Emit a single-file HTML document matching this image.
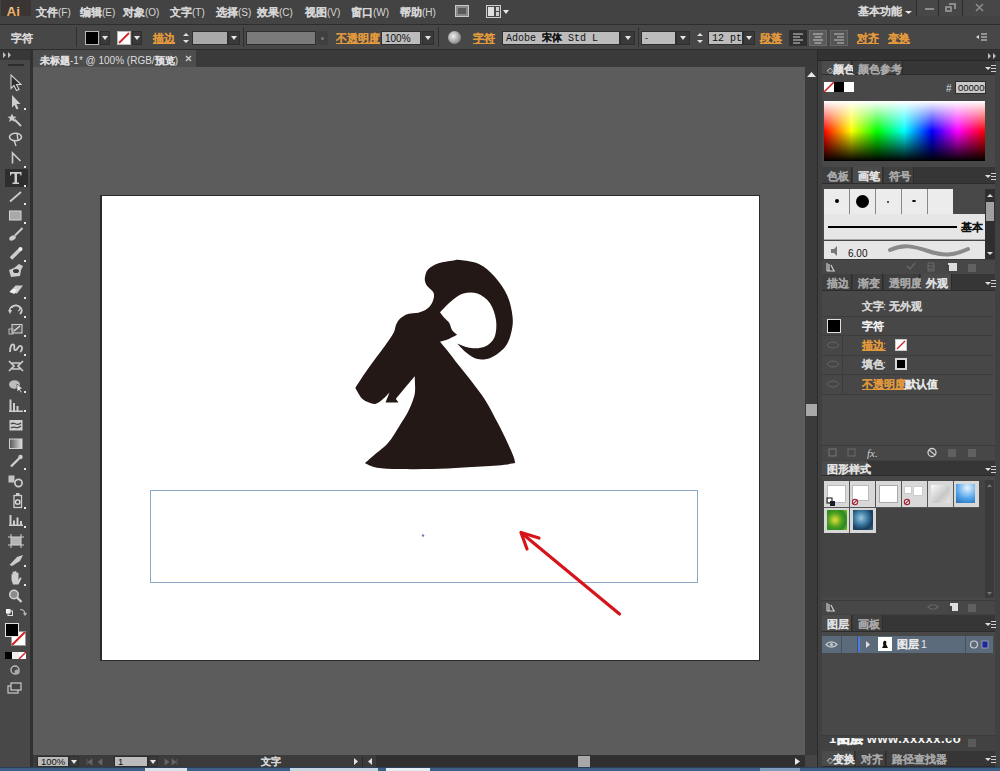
<!DOCTYPE html>
<html><head><meta charset="utf-8">
<style>
*{margin:0;padding:0;box-sizing:border-box}
html,body{width:1000px;height:771px;overflow:hidden;background:#535353;font-family:"Liberation Sans",sans-serif;font-size:11px;color:#d6d6d6}
.a{position:absolute}
.t{position:absolute;white-space:nowrap;line-height:11px;font-size:11px}
.c{display:inline-block;text-align:justify;text-align-last:justify;-webkit-text-stroke:0.7px currentColor;white-space:nowrap}
.or{color:#e39a3c}
.ul,.ul .c{text-decoration:underline}
.inp{position:absolute;background:#bcbcbc;border:1px solid #2e2e2e;color:#111;font-size:10px;line-height:11px;padding-left:3px;white-space:nowrap}
.dd{position:absolute;background:#3a3a3a;border:1px solid #2e2e2e}
.dd:after{content:"";position:absolute;left:50%;top:50%;margin-left:-3px;margin-top:-2px;border-left:3px solid transparent;border-right:3px solid transparent;border-top:4px solid #e6e6e6}
.sep{position:absolute;width:1px;background:#2f2f2f}
svg{position:absolute;overflow:visible}
</style></head><body>
<!-- ============ MENU BAR ============ -->
<div class="a" style="left:0;top:0;width:1000px;height:24px;background:#434343"></div>
<div class="a" style="left:1px;top:0;width:30px;height:16px;background:#3a3532"></div>
<svg style="left:0;top:0" width="40" height="24"><defs><linearGradient id="aig" x1="0" y1="0" x2="0" y2="1"><stop offset="0" stop-color="#f2dca8"/><stop offset="1" stop-color="#e0923c"/></linearGradient></defs><text x="6.5" y="16" font-family="Liberation Sans" font-weight="bold" font-size="13.5" fill="url(#aig)">Ai</text></svg>
<div class="t" style="left:36px;top:7px"><span class="c" style="width:2em;">文件</span><span style="font-size:10px">(F)</span></div>
<div class="t" style="left:80px;top:7px"><span class="c" style="width:2em;">编辑</span><span style="font-size:10px">(E)</span></div>
<div class="t" style="left:123px;top:7px"><span class="c" style="width:2em;">对象</span><span style="font-size:10px">(O)</span></div>
<div class="t" style="left:170px;top:7px"><span class="c" style="width:2em;">文字</span><span style="font-size:10px">(T)</span></div>
<div class="t" style="left:216px;top:7px"><span class="c" style="width:2em;">选择</span><span style="font-size:10px">(S)</span></div>
<div class="t" style="left:257px;top:7px"><span class="c" style="width:2em;">效果</span><span style="font-size:10px">(C)</span></div>
<div class="t" style="left:305px;top:7px"><span class="c" style="width:2em;">视图</span><span style="font-size:10px">(V)</span></div>
<div class="t" style="left:351px;top:7px"><span class="c" style="width:2em;">窗口</span><span style="font-size:10px">(W)</span></div>
<div class="t" style="left:400px;top:7px"><span class="c" style="width:2em;">帮助</span><span style="font-size:10px">(H)</span></div>
<!-- Br icon -->
<div class="a" style="left:455px;top:5px;width:14px;height:12px;background:#8a8a8a;border:1px solid #c8c8c8"></div>
<div class="a" style="left:458px;top:8px;width:8px;height:6px;background:#5a5a5a"></div>
<!-- arrange icon -->
<div class="a" style="left:486px;top:5px;width:15px;height:13px;border:1px solid #cfcfcf;background:#4a4a4a"></div>
<div class="a" style="left:488px;top:7px;width:6px;height:9px;background:#e0e0e0"></div>
<div class="a" style="left:496px;top:7px;width:3px;height:4px;background:#d0d0d0"></div>
<div class="a" style="left:496px;top:12px;width:3px;height:4px;background:#d0d0d0"></div>
<div class="a" style="left:503px;top:10px;border-left:3px solid transparent;border-right:3px solid transparent;border-top:4px solid #e8e8e8"></div>
<div class="t" style="left:858px;top:6px"><span class="c" style="width:4em;">基本功能</span></div>
<svg style="left:904px;top:10px" width="9" height="5"><path d="M1 1H8L4.5 4Z" fill="#e8e8e8"/></svg>
<div class="a" style="left:917px;top:0;width:83px;height:16px;background:#474747"></div>
<div class="sep" style="left:916px;top:0;height:16px;background:#2c2c2c"></div>
<div class="sep" style="left:938px;top:0;height:16px;background:#2c2c2c"></div>
<div class="sep" style="left:962px;top:0;height:16px;background:#2c2c2c"></div>
<div class="a" style="left:925px;top:8px;width:9px;height:2px;background:#8c8c8c"></div>
<div class="a" style="left:945px;top:6px;width:7px;height:6px;border:2px solid #8c8c8c;border-radius:1px"></div>
<div class="a" style="left:949px;top:3px;width:7px;height:6px;border:2px solid #8c8c8c;border-left:none;border-bottom:none"></div>
<svg style="left:975px;top:3px" width="10" height="10"><path d="M1 1L8 8M8 1L1 8" stroke="#8c8c8c" stroke-width="1.6"/></svg>

<!-- ============ CONTROL BAR ============ -->
<div class="a" style="left:0;top:24px;width:1000px;height:26px;background:#474747;border-top:1px solid #2d2d2d;border-bottom:1px solid #2d2d2d"></div>
<div class="t" style="left:11px;top:33px"><span class="c" style="width:2em;">字符</span></div>
<div class="sep" style="left:76px;top:27px;height:20px"></div>
<div class="a" style="left:85px;top:31px;width:14px;height:14px;background:#000;border:1px solid #b8b8b8"></div>
<div class="dd" style="left:100px;top:31px;width:10px;height:14px"></div>
<div class="a" style="left:117px;top:31px;width:14px;height:14px;background:#fff;border:1px solid #b8b8b8"></div>
<svg style="left:117px;top:31px" width="14" height="14"><path d="M2 12L12 2" stroke="#d42828" stroke-width="1.8"/></svg>
<div class="dd" style="left:132px;top:31px;width:10px;height:14px"></div>
<div class="t or ul" style="left:153px;top:33px"><span class="c" style="width:2em;">描边</span></div>
<svg style="left:182px;top:31px" width="8" height="14"><path d="M1 5L4 2L7 5ZM1 9L4 12L7 9Z" fill="#e0e0e0"/></svg>
<div class="inp" style="left:192px;top:31px;width:36px;height:14px;background:#a9a9a9"></div>
<div class="dd" style="left:228px;top:31px;width:12px;height:14px"></div>
<div class="sep" style="left:243px;top:27px;height:20px"></div>
<div class="a" style="left:246px;top:31px;width:70px;height:14px;background:#7a7a7a;border:1px solid #2e2e2e"></div>
<div class="a" style="left:317px;top:31px;width:11px;height:14px;background:#404040"></div>
<div class="a" style="left:321px;top:37px;width:3px;height:3px;background:#777;border-radius:2px"></div>
<div class="t or ul" style="left:336px;top:33px"><span class="c" style="width:4em;">不透明度</span></div>
<div class="inp" style="left:381px;top:31px;width:40px;height:14px;padding-top:1px">100%</div>
<div class="dd" style="left:422px;top:31px;width:12px;height:14px"></div>
<div class="sep" style="left:438px;top:27px;height:20px"></div>
<div class="a" style="left:448px;top:31px;width:13px;height:13px;border-radius:50%;background:radial-gradient(circle at 40% 40%,#f0f0f0,#8a8a8a 70%,#555)"></div>
<div class="t or ul" style="left:473px;top:33px"><span class="c" style="width:2em;">字符</span></div>
<div class="inp" style="left:502px;top:31px;width:118px;height:14px;padding-top:1px;font-family:'Liberation Mono',monospace;font-size:10px">Adobe <span class="c" style="width:2em;">宋体</span> Std L</div>
<div class="dd" style="left:620px;top:31px;width:15px;height:14px"></div>
<div class="sep" style="left:638px;top:27px;height:20px"></div>
<div class="inp" style="left:641px;top:31px;width:35px;height:14px;padding-top:1px;font-size:9px">-</div>
<div class="dd" style="left:676px;top:31px;width:14px;height:14px"></div>
<svg style="left:696px;top:31px" width="8" height="14"><path d="M1 5L4 2L7 5ZM1 9L4 12L7 9Z" fill="#e0e0e0"/></svg>
<div class="inp" style="left:708px;top:31px;width:35px;height:14px;padding-top:1px;font-family:'Liberation Mono',monospace">12 pt</div>
<div class="dd" style="left:743px;top:31px;width:12px;height:14px"></div>
<div class="t or ul" style="left:760px;top:33px"><span class="c" style="width:2em;">段落</span></div>
<div class="a" style="left:789px;top:30px;width:18px;height:16px;background:#2f2f2f"></div>
<div class="a" style="left:809px;top:30px;width:18px;height:16px;background:#5a5a5a;border:1px solid #6a6a6a"></div>
<div class="a" style="left:830px;top:30px;width:18px;height:16px;background:#545454;border:1px solid #666"></div>
<svg style="left:789px;top:30px" width="60" height="16">
<path d="M4 4h10M4 7h7M4 10h10M4 13h7" stroke="#d0d0d0" stroke-width="1"/>
<path d="M24 4h10M25.5 7h7M24 10h10M25.5 13h7" stroke="#c8c8c8" stroke-width="1"/>
<path d="M45 4h10M48 7h7M45 10h10M48 13h7" stroke="#c0c0c0" stroke-width="1"/>
</svg>
<div class="t or ul" style="left:857px;top:33px"><span class="c" style="width:2em;">对齐</span></div>
<div class="t or ul" style="left:888px;top:33px"><span class="c" style="width:2em;">变换</span></div>
<svg style="left:975px;top:32px" width="14" height="12"><path d="M1 5L4 3L4 7Z" fill="#ddd"/><path d="M6 2h6M6 5h6M6 8h6" stroke="#ddd" stroke-width="1.2"/></svg>
<!-- ============ DOC TAB ROW ============ -->
<div class="a" style="left:32px;top:50px;width:786px;height:17px;background:#3a3a3a"></div>
<div class="a" style="left:32px;top:50px;width:164px;height:17px;background:#4d4d4d"></div>
<div class="t" style="left:40px;top:55px;font-size:10px;color:#dedede"><span class="c" style="width:3em;font-size:10px;">未标题</span>-1* @ 100% (RGB/<span class="c" style="width:2em;font-size:10px;">预览</span>)</div>
<svg style="left:185px;top:55px" width="8" height="8"><path d="M1 1L6 6M6 1L1 6" stroke="#cfcfcf" stroke-width="1.3"/></svg>

<!-- ============ TOOLBAR ============ -->
<div class="a" style="left:0;top:50px;width:33px;height:717px;background:#484848"></div>
<div class="a" style="left:0;top:50px;width:31px;height:10px;background:#373737"></div>
<svg style="left:3px;top:52px" width="10" height="6"><path d="M0 0L3 3L0 6ZM5 0L8 3L5 6Z" fill="#c0c0c0"/></svg>
<div class="a" style="left:8px;top:64px;width:16px;height:2px;background:#2c2c2c"></div>
<div class="a" style="left:30px;top:50px;width:3px;height:717px;background:#303030"></div>
<div class="a" style="left:5px;top:169px;width:23px;height:18px;background:#2e2e2e"></div>
<svg style="left:0;top:0" width="33" height="771">
<g fill="#cdcdcd" stroke="none">
<path d="M11 75L11 88.5L14 85.5L16.5 90.5L19 89.5L16.5 84.5L21 84.5Z" fill="#2c2c2c" stroke="#d2d2d2" stroke-width="1.1"/>
<path d="M12 95L12 107.5L14.5 105L16.5 109.5L18.5 108.5L16.5 104L20.5 104Z"/>
<path d="M12 113.5L13.3 116.6L16.5 116.8L14 118.8L15 122L12 120.2L9 122L10 118.8L7.5 116.8L10.7 116.6Z"/>
<path d="M14.5 119.5L21 126" stroke="#cdcdcd" stroke-width="1.8"/>
<ellipse cx="15.5" cy="137" rx="6" ry="3.8" fill="none" stroke="#cdcdcd" stroke-width="1.6"/>
<path d="M14 140L16 146M17 133L18 141" stroke="#cdcdcd" stroke-width="1.4"/>
<path d="M12.5 163.5L12.5 153L20.5 161" fill="none" stroke="#cdcdcd" stroke-width="1.6"/>
<path d="M10 172H21.5V175.5H20.5L20 173.8H17V182.6H19V184H12.5V182.6H14.5V173.8H11.5L11 175.5H10Z"/>
<path d="M10 201.5L21 192" stroke="#cdcdcd" stroke-width="1.7"/>
<rect x="9.5" y="211" width="11.5" height="9" fill="#a8a8a8" stroke="#d4d4d4" stroke-width="1"/>
<path d="M22.5 228L15 235.5" stroke="#cdcdcd" stroke-width="2"/><ellipse cx="12.5" cy="238" rx="3.5" ry="2.3" transform="rotate(-30 12.5 238)"/>
<path d="M20.5 249L11 258.5" stroke="#cdcdcd" stroke-width="3.6"/><circle cx="20.5" cy="249" r="2" fill="#eee"/>
<path d="M9 270L14 268L19 264L23 266L21 270L20 276L11 277Z"/><ellipse cx="16" cy="271" rx="3" ry="2" fill="#3a3a3a"/>
<path d="M9.5 292L15.5 285.5L23 285.5L17 293.5Z"/><path d="M9.5 292L12.5 289L17 289L14.5 294Z" fill="#eee"/>
<path d="M10 312A6 5 0 1 1 20 314" fill="none" stroke="#cdcdcd" stroke-width="1.8"/><path d="M12 308A4 3 0 1 1 18 311" fill="none" stroke="#cdcdcd" stroke-width="1.2"/><path d="M8 310L12 310L10 314Z"/>
<rect x="12" y="324.5" width="10" height="8.5" fill="#5a5a5a" stroke="#d0d0d0" stroke-width="1.1"/><path d="M14 331L20 326" stroke="#ddd" stroke-width="1.3"/><rect x="9" y="329" width="4" height="5" fill="none" stroke="#bbb" stroke-width="1"/>
<path d="M10 352C10 346 12 343 14 345C15 347 13 351 16 350C18 349 18 345 21 346C23 347 22 351 20 352" fill="none" stroke="#cdcdcd" stroke-width="1.8"/>
<path d="M9 361L14 366L9 371M23 361L18 366L23 371M12 363H20M12 369H20" fill="none" stroke="#cdcdcd" stroke-width="1.7"/>
<ellipse cx="14.5" cy="384.5" rx="5.5" ry="4.2" fill="#bdbdbd"/><path d="M17 384L17 392L19 390L21 393L22 392L20 389L23 389Z" fill="#e4e4e4" stroke="#3a3a3a" stroke-width="0.6"/>
<path d="M9.5 412V399.5H11.5V412ZM13 412V403H15V412ZM16.5 412V406H18.5V412ZM9 410.5H23V412H9Z"/>
<rect x="9.5" y="420" width="13" height="10.5" fill="#cfcfcf"/><path d="M11 424C14 421 17 427 21 423M11 428C14 425 17 430 21 426" stroke="#444" stroke-width="1.3" fill="none"/>
<rect x="9.5" y="439" width="12.5" height="9.5" fill="url(#tg)" stroke="#cfcfcf" stroke-width="1"/>
<path d="M21.5 456L11 466.5" stroke="#cdcdcd" stroke-width="2.4"/><circle cx="20.5" cy="457" r="2.2"/>
<rect x="8.5" y="475.5" width="6" height="7" fill="#c4c4c4"/><circle cx="18.5" cy="483" r="3.6" fill="none" stroke="#cdcdcd" stroke-width="1.7"/>
<rect x="14" y="495.5" width="7.5" height="12" fill="none" stroke="#cdcdcd" stroke-width="1.3"/><circle cx="17.7" cy="502" r="2.2" fill="none" stroke="#e0e0e0" stroke-width="1.3"/><rect x="16" y="493" width="3.5" height="2"/>
<path d="M9.5 526V515H11.5V526ZM13 526V520.5H15V526ZM16.5 526V517.5H18.5V526ZM20 526V521H22V526ZM9 524.5H23V526H9Z"/>
<rect x="11" y="537" width="10" height="8" fill="#b4b4b4"/><path d="M8 537H24M8 545H24M11 534V548M21 534V548" stroke="#d0d0d0" stroke-width="1"/>
<path d="M9.5 565L17 557L23 555L20 561L12 566Z"/>
<path d="M11.5 580V574.5Q11.5 573.5 12.5 574.5V579V572Q13.5 571 14.5 572V579V571.5Q15.5 570.5 16.5 571.5V579V573Q17.5 572 18.5 573V580L20 577.5Q21.5 577 21.5 578.5L18.5 584.5H13Z"/>
<circle cx="14" cy="594.5" r="4.2" fill="#8a8a8a" stroke="#d0d0d0" stroke-width="1.6"/><path d="M17 597.5L21.5 602" stroke="#d0d0d0" stroke-width="2.4"/>
<path d="M24 108h2v2h-2zM24 166h2v2h-2zM24 185h2v2h-2zM24 203h2v2h-2zM24 222h2v2h-2zM24 260h2v2h-2zM24 297h2v2h-2zM24 316h2v2h-2zM24 335h2v2h-2zM24 354h2v2h-2zM24 391h2v2h-2zM24 410h2v2h-2zM24 468h2v2h-2zM24 507h2v2h-2zM24 526h2v2h-2zM24 565h2v2h-2zM24 584h2v2h-2z" fill="#e6e6e6"/>
<rect x="6" y="609" width="4.5" height="4.5" fill="#fff"/><rect x="8" y="611" width="4.5" height="4.5" fill="none" stroke="#ddd" stroke-width="1"/>
<path d="M20 609.5C23 609.5 25 611.5 25 614.5M23.5 613L25 615L26.5 613" fill="none" stroke="#bbb" stroke-width="1.2"/>
</g>
<defs><linearGradient id="tg"><stop offset="0" stop-color="#555"/><stop offset="1" stop-color="#e0e0e0"/></linearGradient></defs>
</svg>
<!-- fill / stroke -->
<div class="a" style="left:11px;top:631px;width:15px;height:15px;background:#fff;border:1px solid #999"></div>
<svg style="left:11px;top:631px" width="15" height="15"><path d="M1 14L14 1" stroke="#d02020" stroke-width="2"/><rect x="3" y="3" width="9" height="9" fill="none" stroke="#d02020" stroke-width="0"/></svg>
<div class="a" style="left:5px;top:623px;width:14px;height:14px;background:#000;border:1px solid #e0e0e0"></div>
<div class="a" style="left:5px;top:652px;width:7px;height:7px;background:#000"></div>
<div class="a" style="left:12px;top:652px;width:7px;height:7px;background:#eee"></div>
<div class="a" style="left:19px;top:652px;width:7px;height:7px;background:#fff"></div>
<svg style="left:19px;top:652px" width="7" height="7"><path d="M0 7L7 0" stroke="#d02020" stroke-width="1.5"/></svg>
<svg style="left:0;top:0" width="33" height="771">
<circle cx="15" cy="670" r="4" fill="none" stroke="#bbb" stroke-width="1.4"/><circle cx="17" cy="672" r="2.5" fill="#aaa"/>
<rect x="8" y="686" width="10" height="7" fill="none" stroke="#ccc" stroke-width="1.2"/><rect x="11" y="683" width="10" height="7" fill="#444" stroke="#ccc" stroke-width="1.2"/>
</svg>
<!-- ============ CANVAS ============ -->
<div class="a" style="left:33px;top:67px;width:772px;height:688px;background:#5c5c5c"></div>
<div class="a" style="left:100px;top:195px;width:660px;height:466px;background:#2a2a2a"></div>
<div class="a" style="left:102px;top:196px;width:657px;height:464px;background:#fff"></div>
<svg style="left:0;top:0" width="1000" height="771">
<path fill="#231815" d="M355.3 388.0 C356.4 386.2 359.6 381.2 362.0 377.5 C364.4 373.8 367.0 370.2 370.0 366.0 C373.0 361.8 376.8 356.8 380.0 352.5 C383.2 348.2 386.7 343.4 389.0 340.0 C391.3 336.6 392.8 334.5 394.0 332.0 C395.2 329.5 395.0 327.2 396.0 325.0 C397.0 322.8 398.2 320.3 400.2 318.5 C402.2 316.7 405.0 315.0 408.0 314.0 C411.0 313.0 415.3 313.4 418.3 312.7 C421.3 311.9 423.9 310.9 426.1 309.5 C428.3 308.1 430.0 306.5 431.3 304.3 C432.6 302.1 433.8 298.7 434.0 296.5 C434.2 294.3 433.8 293.1 432.6 291.3 C431.4 289.5 428.1 287.6 426.8 285.5 C425.5 283.4 424.6 281.3 424.8 278.6 C425.0 275.9 425.8 272.0 428.0 269.5 C430.2 267.0 433.6 265.0 437.8 263.5 C442.0 262.0 449.7 261.1 453.4 260.5 C457.1 259.9 455.9 259.5 460.2 260.1 C464.4 260.7 473.2 261.3 478.9 264.0 C484.6 266.7 489.8 271.3 494.5 276.5 C499.2 281.7 504.0 288.5 507.0 295.0 C510.0 301.5 511.6 309.4 512.4 315.4 C513.2 321.4 512.8 325.8 511.6 331.0 C510.4 336.2 508.8 342.1 505.4 346.5 C502.0 350.9 496.1 355.3 491.4 357.4 C486.7 359.5 481.5 359.8 477.4 359.0 C473.2 358.2 469.9 355.3 466.5 352.7 C463.1 350.1 458.7 344.9 457.1 343.4 C459.4 344.2 466.4 347.5 471.1 348.0 C475.8 348.5 481.2 348.3 485.1 346.5 C489.0 344.7 492.7 341.6 494.5 337.2 C496.3 332.8 496.8 325.7 496.0 320.0 C495.2 314.3 492.9 307.4 489.8 303.0 C486.7 298.6 481.8 295.2 477.4 293.6 C473.0 292.0 467.7 292.3 463.3 293.6 C458.9 294.9 454.8 298.3 450.9 301.4 C447.0 304.5 441.8 310.5 440.0 312.3 C440.7 313.2 442.4 315.7 444.0 317.5 C445.6 319.3 448.0 320.9 449.3 323.0 C450.6 325.1 450.7 328.0 452.0 330.0 C453.3 332.0 456.2 334.0 457.1 334.8 C455.8 335.4 452.2 337.5 449.3 338.7 C446.4 339.9 441.6 341.3 440.0 341.8 C441.1 343.2 443.8 346.2 446.9 350.1 C450.0 354.0 454.5 360.0 458.7 365.3 C462.9 370.6 467.7 376.3 472.2 382.2 C476.7 388.1 481.4 394.0 485.6 400.7 C489.8 407.4 493.8 415.6 497.5 422.6 C501.2 429.6 505.0 437.3 507.6 442.9 C510.2 448.5 512.0 452.6 513.3 456.0 C514.6 459.4 514.9 461.9 515.2 463.1 C512.2 463.5 506.1 464.9 497.5 465.6 C488.9 466.3 474.6 466.9 463.7 467.5 C452.8 468.1 443.0 468.8 432.2 469.0 C421.4 469.2 408.3 469.2 399.1 469.0 C389.9 468.8 382.7 468.6 377.0 467.7 C371.3 466.8 366.9 464.0 364.9 463.3 C366.0 462.3 367.6 460.7 371.5 457.3 C375.4 453.9 383.4 448.1 388.0 443.0 C392.6 437.9 395.8 431.6 399.1 426.4 C402.4 421.2 405.5 416.6 407.9 412.0 C410.3 407.4 412.2 402.5 413.4 398.8 C414.6 395.1 414.9 393.8 415.1 390.0 C415.3 386.2 414.8 378.5 414.7 376.2 C411.6 380.0 399.0 395.1 395.9 398.9 C396.3 399.5 398.1 401.9 398.5 402.5 C396.4 402.5 387.8 402.5 385.6 402.5 C386.2 400.8 388.9 394.1 389.5 392.4 C388.4 393.5 385.3 397.1 383.0 399.0 C380.7 400.9 378.1 403.2 375.8 403.8 C373.5 404.4 371.4 403.4 369.0 402.5 C366.6 401.6 364.0 400.6 361.7 398.2 C359.4 395.8 356.4 389.7 355.3 388.0 Z"/>
<rect x="150.5" y="490.5" width="547" height="92" fill="none" stroke="#8ea7c7" stroke-width="1"/>
<circle cx="423" cy="535.5" r="1.2" fill="#7a7ab0"/>
<path d="M619.5 614L521.5 533" stroke="#d7141c" stroke-width="3.2" stroke-linecap="round"/>
<path d="M539 538L521 532.5L527 549" fill="none" stroke="#d7141c" stroke-width="3.2" stroke-linecap="round" stroke-linejoin="round"/>
</svg>
<!-- vertical scrollbar -->
<div class="a" style="left:805px;top:67px;width:13px;height:688px;background:#3b3b3b"></div>
<svg style="left:805px;top:70px" width="13" height="10"><path d="M2 7L6.5 2L11 7Z" fill="#e8e8e8"/></svg>
<div class="a" style="left:806px;top:404px;width:11px;height:12px;background:#a8a8a8"></div>
<!-- status bar -->
<div class="a" style="left:33px;top:755px;width:785px;height:12px;background:#3b3b3b"></div>
<div class="inp" style="left:37px;top:756px;width:32px;height:11px;font-size:9.5px;line-height:10px">100%</div>
<div class="dd" style="left:69px;top:756px;width:10px;height:11px"></div>
<svg style="left:85px;top:757px" width="80" height="10"><path d="M2 2v6M3 5L7 2V8ZM13 5L17 2V8Z" fill="#666" stroke="#666" stroke-width="0.8"/></svg>
<div class="inp" style="left:114px;top:756px;width:34px;height:11px;font-size:9.5px;line-height:10px">1</div>
<div class="dd" style="left:148px;top:756px;width:10px;height:11px"></div>
<svg style="left:163px;top:757px" width="20" height="10"><path d="M2 2L6 5L2 8ZM9 2L13 5L9 8ZM14 2v6" fill="#666" stroke="#666" stroke-width="0.8"/></svg>
<div class="t" style="left:261px;top:757px;font-size:10px;line-height:10px"><span class="c" style="width:2em;">文字</span></div>
<svg style="left:350px;top:756px" width="30" height="11"><path d="M4 2L8 5.5L4 9Z" fill="#e0e0e0"/><path d="M22 2L18 5.5L22 9Z" fill="#e0e0e0"/><path d="M12.5 0V11" stroke="#2a2a2a"/></svg>
<div class="a" style="left:376px;top:755px;width:429px;height:12px;background:#303030"></div>
<div class="a" style="left:578px;top:756px;width:12px;height:11px;background:#a8a8a8"></div>
<svg style="left:792px;top:756px" width="12" height="11"><path d="M3 2L8 5.5L3 9Z" fill="#e8e8e8"/></svg>
<div class="a" style="left:805px;top:755px;width:13px;height:12px;background:#454545"></div>
<!-- ============ RIGHT DOCK ============ -->
<div class="a" style="left:817px;top:50px;width:183px;height:717px;background:#414141;border-left:1px solid #2a2a2a"></div>
<div class="a" style="left:818px;top:50px;width:182px;height:11px;background:#323232;border-bottom:1px solid #262626"></div>
<svg style="left:988px;top:53px" width="10" height="6"><path d="M0 0L3 3L0 6ZM5 0L8 3L5 6Z" fill="#c0c0c0"/></svg>
<style>
.tr{position:absolute;left:822px;width:173px;background:#363636;border-bottom:1px solid #2c2c2c}
.tb{position:absolute;height:100%;top:0;background:#3f3f3f;border-right:1px solid #2c2c2c;color:#a8a8a8;font-size:10.5px;line-height:10px;padding-top:3px;padding-left:5px;white-space:nowrap}
.tb.on{background:#4b4b4b;color:#e2e2e2}
.pc{position:absolute;left:822px;width:173px;background:#484848}
.mi{position:absolute;left:985px;width:11px;height:7px}
.mi:before{content:"";position:absolute;left:0;top:2px;border-left:3px solid transparent;border-right:3px solid transparent;border-top:3px solid #ddd}
.mi:after{content:"";position:absolute;left:6px;top:0;width:5px;height:7px;background:repeating-linear-gradient(#cfcfcf 0 1px,transparent 1px 3px)}
.ft{position:absolute;left:822px;width:173px;background:#474747;border-top:1px solid #3a3a3a}
</style>
<!-- color panel -->
<div class="tr" style="top:61px;height:14px"><div class="tb on" style="left:0px;width:30px"><span style="font-size:8px">◇</span><span class="c" style="width:2em;">颜色</span></div><div class="tb" style="left:31px;width:50px"><span class="c" style="width:4em;">颜色参考</span></div></div>
<div class="mi" style="top:65px"></div>
<div class="pc" style="top:75px;height:92px"></div>
<div class="a" style="left:824px;top:82px;width:10px;height:10px;background:#fff"></div>
<svg style="left:824px;top:82px" width="10" height="10"><path d="M0 10L10 0" stroke="#d02020" stroke-width="1.6"/></svg>
<div class="a" style="left:834px;top:82px;width:10px;height:10px;background:#000"></div>
<div class="a" style="left:844px;top:82px;width:10px;height:10px;background:#fff"></div>
<div class="t" style="left:946px;top:83px;font-size:10px;color:#ddd">#</div>
<div class="inp" style="left:955px;top:81px;width:31px;height:13px;font-size:9.5px;line-height:11px;background:#c8c8c8;padding-left:2px;overflow:hidden">000000</div>
<div class="a" style="left:824px;top:101px;width:161px;height:60px;background:linear-gradient(to right,#f00 0%,#ff0 17%,#0f0 33%,#0ff 50%,#00f 67%,#f0f 83%,#f00 100%)"></div>
<div class="a" style="left:824px;top:101px;width:161px;height:60px;background:linear-gradient(to bottom,#fff 0%,rgba(255,255,255,0) 50%,rgba(0,0,0,0) 50%,#000 100%)"></div>
<!-- brushes panel -->
<div class="tr" style="top:167px;height:17px"><div class="tb" style="left:0px;width:30px;padding-top:4px"><span class="c" style="width:2em;">色板</span></div><div class="tb on" style="left:31px;width:30px;padding-top:4px"><span class="c" style="width:2em;">画笔</span></div><div class="tb" style="left:62px;width:30px;padding-top:4px"><span class="c" style="width:2em;">符号</span></div></div>
<div class="mi" style="top:173px"></div>
<div class="pc" style="top:184px;height:75px"></div>
<div class="a" style="left:824px;top:189px;width:129px;height:25px;background:#ececec"></div>
<div class="a" style="left:849px;top:189px;width:1px;height:25px;background:#888"></div>
<div class="a" style="left:875px;top:189px;width:1px;height:25px;background:#888"></div>
<div class="a" style="left:901px;top:189px;width:1px;height:25px;background:#888"></div>
<div class="a" style="left:927px;top:189px;width:1px;height:25px;background:#888"></div>
<div class="a" style="left:835px;top:199px;width:4px;height:4px;background:#000;border-radius:50%"></div>
<div class="a" style="left:856px;top:195px;width:13px;height:13px;background:#000;border-radius:50%"></div>
<div class="a" style="left:887px;top:201px;width:2px;height:2px;background:#222;border-radius:50%"></div>
<div class="a" style="left:912px;top:200px;width:4px;height:2px;background:#000;border-radius:50%"></div>
<div class="a" style="left:824px;top:214px;width:161px;height:26px;background:#e6e6e6;border-bottom:1px solid #aaa"></div>
<div class="a" style="left:828px;top:226px;width:129px;height:2px;background:#000"></div>
<div class="t" style="left:961px;top:222px;color:#111;font-size:10.5px"><span class="c" style="width:2em;">基本</span></div>
<div class="a" style="left:824px;top:241px;width:161px;height:18px;background:#e6e6e6"></div>
<svg style="left:828px;top:244px" width="150" height="14"><path d="M3 5h3l3-3v10l-3-3h-3z" fill="#777"/><path d="M62 6C75 0 85 2 100 7S125 12 140 5" stroke="#8a8a8a" stroke-width="4" fill="none" stroke-linecap="round"/></svg>
<div class="t" style="left:848px;top:249px;color:#111;font-size:10px;line-height:9px">6.00</div>
<div class="a" style="left:985px;top:189px;width:10px;height:70px;background:#2e2e2e"></div>
<svg style="left:985px;top:191px" width="10" height="68"><path d="M2 6L5 3L8 6Z" fill="#ddd"/><path d="M2 61L5 64L8 61Z" fill="#ddd"/></svg>
<div class="a" style="left:986px;top:202px;width:8px;height:19px;background:#a0a0a0"></div>
<div class="ft" style="top:259px;height:15px"></div>
<svg style="left:819px;top:259px" width="177" height="15">
<path d="M8 4v8M10 5v7M12 6L15 12M8 12h8" stroke="#cfcfcf" stroke-width="1.2" fill="none"/>
<path d="M88 7l3 3 5-6" stroke="#666" stroke-width="1.5" fill="none"/>
<path d="M109 4h6v8h-6zM109 7h6M109 10h6" stroke="#6a6a6a" stroke-width="1" fill="none"/>
<rect x="129" y="4" width="9" height="8" fill="#ddd"/><rect x="126" y="6" width="4" height="6" fill="#444"/>
<path d="M149 5h8v8h-8z" fill="#606060"/>
</svg>
<!-- appearance panel -->
<div class="tr" style="top:274px;height:17px"><div class="tb" style="left:0px;width:30px;padding-top:4px"><span class="c" style="width:2em;">描边</span></div><div class="tb" style="left:31px;width:30px;padding-top:4px"><span class="c" style="width:2em;">渐变</span></div><div class="tb" style="left:62px;width:36px;padding-top:4px"><span class="c" style="width:3em;">透明度</span></div><div class="tb on" style="left:99px;width:31px;padding-top:4px"><span class="c" style="width:2em;">外观</span></div></div>
<div class="mi" style="top:280px"></div>
<div class="pc" style="top:291px;height:154px"></div>
<div class="a" style="left:822px;top:297px;width:171px;height:97px;background:#474747"></div>
<div class="a" style="left:822px;top:316px;width:171px;height:1px;background:#3c3c3c"></div>
<div class="a" style="left:822px;top:335px;width:171px;height:1px;background:#3c3c3c"></div>
<div class="a" style="left:822px;top:355px;width:171px;height:1px;background:#3c3c3c"></div>
<div class="a" style="left:822px;top:374px;width:171px;height:1px;background:#3c3c3c"></div>
<div class="a" style="left:822px;top:394px;width:171px;height:1px;background:#3c3c3c"></div>
<div class="a" style="left:842px;top:335px;width:1px;height:59px;background:#3c3c3c"></div>
<div class="t" style="left:862px;top:301px;font-size:10.5px"><span class="c" style="width:2em;">文字</span>: <span class="c" style="width:3em;">无外观</span></div>
<div class="a" style="left:827px;top:319px;width:14px;height:14px;background:#000;border:1px solid #e0e0e0"></div>
<div class="t" style="left:862px;top:321px;font-size:10.5px;color:#eee"><span class="c" style="width:2em;">字符</span></div>
<svg style="left:826px;top:340px" width="14" height="50"><g fill="none" stroke="#666" stroke-width="1"><path d="M1 5C4 1 10 1 13 5C10 9 4 9 1 5Z"/><path d="M1 24C4 20 10 20 13 24C10 28 4 28 1 24Z"/><path d="M1 44C4 40 10 40 13 44C10 48 4 48 1 44Z"/></g></svg>
<div class="t or ul" style="left:862px;top:340px;font-size:10.5px"><span class="c" style="width:2em;">描边</span>:</div>
<div class="a" style="left:895px;top:339px;width:12px;height:12px;background:#fff;border:1px solid #ccc"></div>
<svg style="left:895px;top:339px" width="12" height="12"><path d="M2 10L10 2" stroke="#d02020" stroke-width="1.3"/></svg>
<div class="t" style="left:862px;top:359px;font-size:10.5px"><span class="c" style="width:2em;">填色</span>:</div>
<div class="a" style="left:895px;top:358px;width:12px;height:12px;background:#000;border:2px solid #d8d8d8"></div>
<div class="t or ul" style="left:862px;top:379px;font-size:10.5px"><span class="c" style="width:4em;">不透明度</span></div>
<div class="t" style="left:905px;top:379px;font-size:10.5px;color:#e6e6e6"><span class="c" style="width:3em;">默认值</span></div>
<div class="ft" style="top:445px;height:15px"></div>
<svg style="left:819px;top:445px" width="177" height="15">
<rect x="10" y="4" width="7" height="7" fill="none" stroke="#777" stroke-width="1"/>
<rect x="29" y="4" width="7" height="7" fill="none" stroke="#6a6a6a" stroke-width="1"/>
<text x="48" y="12" font-family="Liberation Serif" font-style="italic" font-size="11" fill="#d0d0d0">fx.</text>
<circle cx="113" cy="7.5" r="4" fill="none" stroke="#cfcfcf" stroke-width="1.3"/><path d="M110 5L116 10" stroke="#cfcfcf" stroke-width="1.2"/>
<rect x="129" y="4" width="8" height="8" fill="#606060"/>
<rect x="149" y="4" width="8" height="8" fill="#606060"/>
</svg>
<!-- graphic styles -->
<div class="tr" style="top:461px;height:15px"><div class="tb on" style="left:0px;width:47px;padding-top:3px"><span class="c" style="width:4em;">图形样式</span></div></div>
<div class="mi" style="top:466px"></div>
<div class="pc" style="top:476px;height:124px"></div>
<div class="a" style="left:822px;top:480px;width:163px;height:118px;background:#444"></div>
<div class="a" style="left:985px;top:480px;width:9px;height:118px;background:#3a3a3a"></div>
<svg style="left:985px;top:482px" width="9" height="116"><path d="M2 5L4.5 2L7 5Z" fill="#777"/><path d="M2 110L4.5 113L7 110Z" fill="#777"/></svg>
<div class="a" style="left:824px;top:481px;width:155px;height:26px;background:#d8d8d8"></div>
<div class="a" style="left:824px;top:507px;width:52px;height:26px;background:#d8d8d8"></div>
<div class="a" style="left:827px;top:485px;width:19px;height:18px;background:#fff;border:1px solid #bbb"></div>
<div class="a" style="left:852px;top:485px;width:17px;height:16px;background:#fff;border:1px solid #bbb"></div>
<div class="a" style="left:879px;top:485px;width:19px;height:18px;background:#fff;border:1px solid #aaa"></div>
<div class="a" style="left:904px;top:486px;width:8px;height:8px;background:#fff;border:1px solid #ccc"></div>
<div class="a" style="left:913px;top:486px;width:10px;height:10px;background:#fff;border:1px solid #ccc"></div>
<div class="a" style="left:931px;top:485px;width:19px;height:18px;background:linear-gradient(135deg,#fafafa,#c8c8c8 60%,#e8e8e8)"></div>
<div class="a" style="left:956px;top:484px;width:19px;height:19px;background:radial-gradient(circle at 60% 20%,#e8f4ff,#4aa0e8 60%,#2a6ab0)"></div>
<svg style="left:824px;top:481px" width="160" height="60">
<rect x="3" y="17" width="5" height="5" fill="none" stroke="#333" stroke-width="1.2"/><rect x="6" y="20" width="5" height="5" fill="#1a1a2a" />
<circle cx="31" cy="21" r="2.6" fill="#fff" stroke="#a02838" stroke-width="1.2"/><path d="M29 23L33 19" stroke="#a02838" stroke-width="1.1"/>
<circle cx="83" cy="21" r="2.6" fill="#fff" stroke="#a02838" stroke-width="1.2"/><path d="M81 23L85 19" stroke="#a02838" stroke-width="1.1"/>
</svg>
<div class="a" style="left:849px;top:481px;width:1px;height:52px;background:#555"></div>
<div class="a" style="left:875px;top:481px;width:1px;height:26px;background:#555"></div>
<div class="a" style="left:901px;top:481px;width:1px;height:26px;background:#555"></div>
<div class="a" style="left:927px;top:481px;width:1px;height:26px;background:#555"></div>
<div class="a" style="left:953px;top:481px;width:1px;height:26px;background:#555"></div>
<div class="a" style="left:824px;top:507px;width:155px;height:1px;background:#555"></div>
<div class="a" style="left:827px;top:510px;width:20px;height:20px;background:radial-gradient(circle at 40% 50%,#e0e040,#50a020 45%,#2a8a20 70%,#80c030)"></div>
<div class="a" style="left:853px;top:510px;width:20px;height:20px;background:radial-gradient(circle at 40% 40%,#9ac8e0,#3a78a0 40%,#1a3a5a 70%,#3a6a8a)"></div>
<div class="ft" style="top:600px;height:14px"></div>
<svg style="left:819px;top:600px" width="177" height="14">
<path d="M8 3v8M10 4v7M12 5L15 11M8 11h8" stroke="#cfcfcf" stroke-width="1.2" fill="none"/>
<path d="M109 7c3-3 7-3 10 0c-3 3-7 3-10 0z" fill="none" stroke="#666" stroke-width="1.2"/>
<rect x="131" y="3" width="8" height="8" fill="#ddd"/><rect x="129" y="6" width="4" height="5" fill="#444"/>
<path d="M149 4h8v8h-8z" fill="#606060"/>
</svg>
<!-- layers -->
<div class="tr" style="top:615px;height:17px"><div class="tb on" style="left:0px;width:30px;padding-top:4px"><span class="c" style="width:2em;">图层</span></div><div class="tb" style="left:31px;width:30px;padding-top:4px"><span class="c" style="width:2em;">画板</span></div></div>
<div class="mi" style="top:621px"></div>
<div class="pc" style="top:632px;height:103px"></div>
<div class="a" style="left:822px;top:636px;width:171px;height:17px;background:#5c6b7c"></div>
<div class="a" style="left:841px;top:636px;width:1px;height:17px;background:#46525e"></div>
<div class="a" style="left:857px;top:636px;width:1px;height:17px;background:#46525e"></div>
<div class="a" style="left:858px;top:637px;width:2px;height:15px;background:#4a7ae8"></div>
<div class="a" style="left:965px;top:636px;width:1px;height:17px;background:#46525e"></div>
<svg style="left:822px;top:636px" width="171" height="17"><path d="M4 8.5C7 5 12 5 15 8.5C12 12 7 12 4 8.5Z" fill="none" stroke="#c8c8c8" stroke-width="1.2"/><circle cx="9.5" cy="8.5" r="1.6" fill="#c8c8c8"/>
<path d="M44 5L48 8.5L44 12Z" fill="#e0e0e0"/>
<circle cx="152" cy="8.5" r="3.5" fill="none" stroke="#d0d0d0" stroke-width="1.2"/>
<rect x="160" y="5" width="6" height="7" fill="#1a2a9a" stroke="#aab" stroke-width="0.8"/></svg>
<div class="a" style="left:878px;top:637px;width:14px;height:14px;background:#fff"></div>
<svg style="left:878px;top:637px" width="14" height="14"><path d="M6 4C8 3 9 5 8 7C9 9 10 11 10 11H4C5 9 6 8 5 7C5 6 5 5 6 4Z" fill="#111"/></svg>
<div class="t" style="left:897px;top:639px;font-size:10.5px;color:#e8e8e8"><span class="c" style="width:2em;">图层</span> 1</div>
<div class="ft" style="top:735px;height:16px;background:#424242"></div>
<div class="a" style="left:829px;top:738px;width:132px;height:8px;overflow:hidden"><div class="t" style="left:0;top:-6px;font-size:13px;line-height:14px;font-weight:bold;color:#f4f4f4;letter-spacing:0.5px">1<span class="c" style="width:2em;">图层</span> www.xxxxx.com</div></div>
<div class="a" style="left:968px;top:739px;width:8px;height:8px;background:#5a5a5a"></div>
<!-- bottom tabs -->
<div class="tr" style="top:751px;height:16px"><div class="tb on" style="left:0px;width:33px;padding-top:3px"><span style="font-size:8px">◇</span><span class="c" style="width:2em;">变换</span></div><div class="tb" style="left:34px;width:30px;padding-top:3px"><span class="c" style="width:2em;">对齐</span></div><div class="tb" style="left:65px;width:54px;padding-top:3px"><span class="c" style="width:5em;">路径查找器</span></div></div>
<div class="mi" style="top:756px"></div>
<!-- blue bar -->
<div class="a" style="left:0;top:767px;width:1000px;height:4px;background:#3d5f86"></div>
<div class="a" style="left:0;top:767px;width:1000px;height:1px;background:#2c4058"></div><div class="a" style="left:145px;top:768px;width:42px;height:3px;background:#d8e2ec"></div><div class="a" style="left:290px;top:768px;width:88px;height:3px;background:#c8d6e4"></div><div class="a" style="left:386px;top:768px;width:44px;height:3px;background:#e4ecf4"></div><div class="a" style="left:760px;top:768px;width:40px;height:3px;background:#7f9cbc"></div>
</body></html>
